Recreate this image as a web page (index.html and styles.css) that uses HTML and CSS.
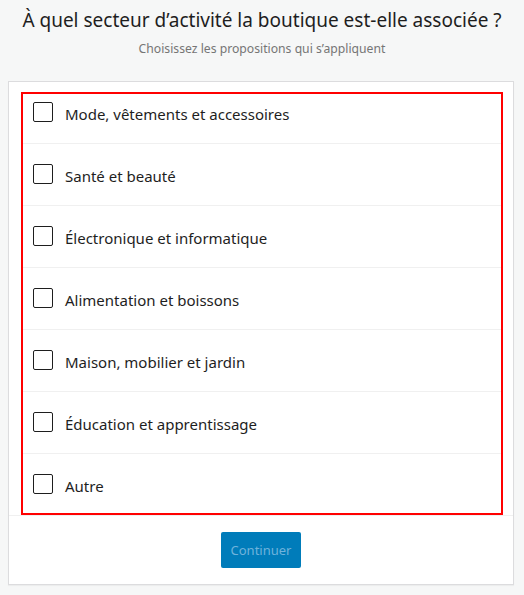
FILE: index.html
```html
<!DOCTYPE html>
<html lang="fr">
<head>
<meta charset="utf-8">
<title>Secteur d'activité</title>
<link rel="stylesheet" href="styles.css">
</head>
<body>
<header class="head">
  <h1 class="title">À quel secteur d’activité la boutique est-elle associée ?</h1>
  <p class="subtitle">Choisissez les propositions qui s’appliquent</p>
</header>
<main class="card">
  <div class="list-wrap">
    <ul class="options">
      <li class="option first"><span class="box"></span><span class="label">Mode, vêtements et accessoires</span></li>
      <li class="option"><span class="box"></span><span class="label">Santé et beauté</span></li>
      <li class="option"><span class="box"></span><span class="label">Électronique et informatique</span></li>
      <li class="option"><span class="box"></span><span class="label">Alimentation et boissons</span></li>
      <li class="option"><span class="box"></span><span class="label">Maison, mobilier et jardin</span></li>
      <li class="option"><span class="box"></span><span class="label">Éducation et apprentissage</span></li>
      <li class="option last"><span class="box"></span><span class="label">Autre</span></li>
    </ul>
  </div>
  <div class="actions">
    <button class="btn" type="button">Continuer</button>
  </div>
</main>
</body>
</html>
```

FILE: styles.css
```css
* { box-sizing: border-box; }
html, body { margin: 0; padding: 0; }
body {
  background: #f6f7f7;
  font-family: "Noto Sans", "Open Sans", "DejaVu Sans", sans-serif;
  color: #1e1e1e;
  width: 524px;
  height: 595px;
  overflow: hidden;
}
.head {
  text-align: center;
  padding-top: 6px;
  height: 81px;
}
.title {
  margin: 0;
  font-size: 19px;
  font-weight: 400;
  line-height: 28px;
  color: #1e1e1e;
}
.subtitle {
  margin: 6px 0 0;
  font-size: 12.2px;
  line-height: 18px;
  color: #757575;
}
.card {
  margin: 0 0 0 8px;
  width: 506px;
  height: 504px;
  background: #fff;
  border: 1px solid #dcdcde;
  box-shadow: 0 1px 1px rgba(0,0,0,0.04);
}
.list-wrap {
  padding: 10px 10px 0 12px;
  border-bottom: 1px solid #f0f0f0;
}
.options {
  list-style: none;
  margin: 0;
  padding: 0;
  border: 2px solid #f00;
}
.option {
  display: flex;
  align-items: center;
  gap: 12px;
  padding: 20px 10px 21px 10px;
  border-bottom: 1px solid #f0f0f0;
  font-size: 15px;
  line-height: 20px;
}
.option.first { padding-top: 8px; }
.option.last { border-bottom: none; padding-bottom: 19px; }
.label { margin-top: 2px; margin-bottom: -2px; }
.box {
  flex: none;
  width: 20px;
  height: 20px;
  border: 1.5px solid #1e1e1e;
  border-radius: 2px;
  background: #fff;
}
.actions {
  display: flex;
  justify-content: center;
  padding-top: 16px;
}
.btn {
  width: 80px;
  height: 36px;
  border: none;
  border-radius: 2px;
  background: #007cba;
  color: #6fb3dc;
  font-family: inherit;
  font-size: 13px;
  padding: 0;
  cursor: default;
}
```
